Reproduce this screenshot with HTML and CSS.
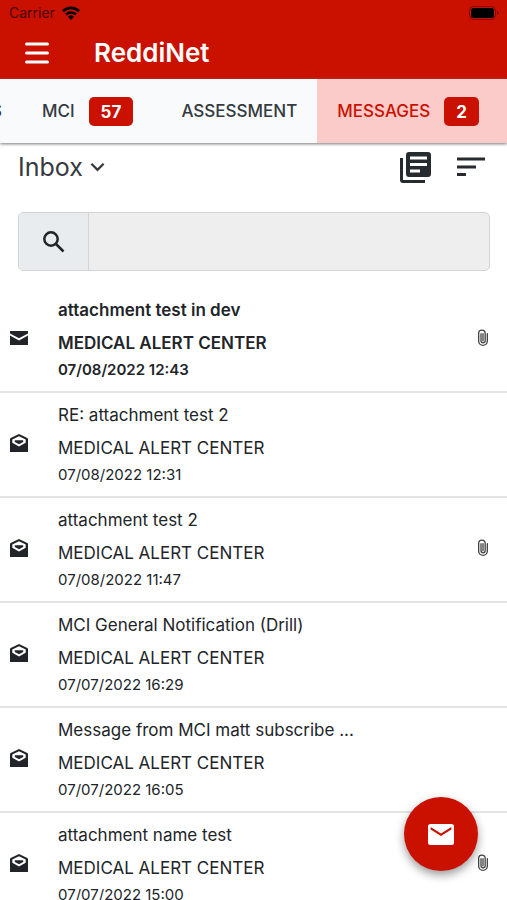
FILE: index.html
```html
<!DOCTYPE html>
<html lang="en">
<head>
<meta charset="utf-8">
<meta name="viewport" content="width=device-width, initial-scale=1">
<title>ReddiNet</title>
<link rel="stylesheet" href="styles.css">
</head>
<body>
<svg class="sprite" aria-hidden="true">
  <symbol id="mail" viewBox="0 0 18 14"><path d="M0 0h18v2.4L9 7.2 0 2.4zM0 4.6l9 4.8 9-4.8V14H0z"/></symbol>
  <symbol id="mail-open" viewBox="0 0 18 18"><path fill-rule="evenodd" d="M9 0l8.3 4Q18 4.400 18 5.200V18H0V5.200Q0 4.400.7 4zM9 2.300L2.300 5.600V8.800L9 12.400l6.700-3.600V5.600z"/><path d="M4.800 6.300h8.400v1.800L9 10.300 4.800 8.100z"/></symbol>
  <symbol id="clip" viewBox="0 0 12 18"><path fill="none" stroke="currentColor" stroke-width="1.400" stroke-linecap="round" d="M8.300 5v7.500a2.200 2.200 0 0 1-4.400 0V5M10.600 5v7.700a4.600 4.600 0 0 1-9.200 0V4.600a3.400 3.400 0 0 1 6.900 0V12M6 5v7.500"/></symbol>
</svg>
<div class="app">
  <header class="header">
    <div class="status">
      <span>Carrier</span>
      <svg class="wifi" viewBox="0 0 18 14" aria-hidden="true"><g fill="none" stroke="currentColor" stroke-width="2.600"><path d="M1 5.200a11.400 11.400 0 0 1 16 0"/><path d="M4 8.500a7.200 7.200 0 0 1 10 0"/></g><path d="M9 14l-3-3.200a4.300 4.300 0 0 1 6 0z"/></svg>
      <svg class="battery" viewBox="0 0 30 14" aria-hidden="true"><rect x=".5" y=".5" width="26" height="13" rx="4" fill="none" stroke="currentColor" opacity=".35"/><rect x="2" y="2" width="23" height="10" rx="2.500"/><path d="M28 5q1.500.5 1.500 2T28 9z" opacity=".5"/></svg>
    </div>
    <div class="titlebar">
      <button class="icon-button" type="button" aria-label="Menu"><svg class="menu-icon" viewBox="0 0 24 22"><path stroke="currentColor" stroke-width="3" stroke-linecap="round" d="M1.500 2h21M1.500 11h21M1.500 20h21"/></svg></button>
      <h1 class="brand">ReddiNet</h1>
    </div>
  </header>
  <nav class="tabs">
    <a class="tab" href="#s">S</a>
    <a class="tab tab-counted" href="#mci">MCI <span class="badge">57</span></a>
    <a class="tab" href="#assessment">ASSESSMENT</a>
    <a class="tab tab-counted tab-active" href="#messages" aria-current="page">MESSAGES <span class="badge">2</span></a>
  </nav>
  <div class="toolbar">
    <div class="folder">
      <select class="folder-select" aria-label="Folder"><option>Inbox</option></select>
      <svg class="chevron" viewBox="0 0 16 10" aria-hidden="true"><path fill="none" stroke="currentColor" stroke-width="2.400" d="M1.500 1.500L8 8l6.500-6.500"/></svg>
    </div>
    <div class="actions">
      <button class="icon-button" type="button" aria-label="Select messages"><svg class="library-icon" viewBox="0 0 31 31"><path d="M0 6h3v22h22v3H3q-3 0-3-3z"/><path fill-rule="evenodd" d="M9 0h19q3 0 3 3v19q0 3-3 3H9q-3 0-3-3V3q0-3 3-3zM10 4.500v3h17v-3zM10 11v3h17v-3zM10 17.500v3h10v-3z"/></svg></button>
      <button class="icon-button" type="button" aria-label="Sort"><svg class="sort-icon" viewBox="0 0 28 20"><path stroke="currentColor" stroke-width="3" d="M0 2h28M0 10h19M0 17.500h9"/></svg></button>
    </div>
  </div>
  <form class="search" role="search">
    <label class="search-label" for="search"><svg class="search-icon" viewBox="0 0 22 22"><g fill="none" stroke="currentColor" stroke-width="2.500"><circle cx="8" cy="8" r="6.700"/><path d="M12.500 12.500L20.500 20.500"/></g></svg></label>
    <input class="search-input" id="search" type="text" aria-label="Search messages">
  </form>
  <main class="list">
    <article class="message message-unread">
      <svg class="mail-icon"><use href="#mail"/></svg>
      <div class="message-body"><h2 class="subject">attachment test in dev</h2><p class="sender">MEDICAL ALERT CENTER</p><p class="date">07/08/2022 12:43</p></div>
      <svg class="clip-icon"><use href="#clip"/></svg>
    </article>
    <article class="message">
      <svg class="mail-icon"><use href="#mail-open"/></svg>
      <div class="message-body"><h2 class="subject">RE: attachment test 2</h2><p class="sender">MEDICAL ALERT CENTER</p><p class="date">07/08/2022 12:31</p></div>
    </article>
    <article class="message">
      <svg class="mail-icon"><use href="#mail-open"/></svg>
      <div class="message-body"><h2 class="subject">attachment test 2</h2><p class="sender">MEDICAL ALERT CENTER</p><p class="date">07/08/2022 11:47</p></div>
      <svg class="clip-icon"><use href="#clip"/></svg>
    </article>
    <article class="message">
      <svg class="mail-icon"><use href="#mail-open"/></svg>
      <div class="message-body"><h2 class="subject">MCI General Notification (Drill)</h2><p class="sender">MEDICAL ALERT CENTER</p><p class="date">07/07/2022 16:29</p></div>
    </article>
    <article class="message">
      <svg class="mail-icon"><use href="#mail-open"/></svg>
      <div class="message-body"><h2 class="subject">Message from MCI matt subscribe ...</h2><p class="sender">MEDICAL ALERT CENTER</p><p class="date">07/07/2022 16:05</p></div>
    </article>
    <article class="message">
      <svg class="mail-icon"><use href="#mail-open"/></svg>
      <div class="message-body"><h2 class="subject">attachment name test</h2><p class="sender">MEDICAL ALERT CENTER</p><p class="date">07/07/2022 15:00</p></div>
      <svg class="clip-icon"><use href="#clip"/></svg>
    </article>
  </main>
  <button class="compose" type="button" aria-label="Compose message"><svg class="compose-icon" viewBox="0 0 26 21"><path fill-rule="evenodd" d="M2.500 0h21Q26 0 26 2.500v16q0 2.500-2.500 2.500h-21Q0 21 0 18.500v-16Q0 0 2.500 0zM2.600 3v2.600L13 12l10.400-6.400V3L13 9.400z"/></svg></button>
</div>
</body>
</html>
```
FILE: styles.css
```css
* { box-sizing: border-box; }

body {
  margin: 0;
  background: #fff;
  color: #212529;
  font-family: Inter, "Liberation Sans", sans-serif;
  font-size: 17px;
  line-height: 24px;
}

h1, h2, p { margin: 0; font-weight: 400; }
svg { display: block; flex: none; fill: currentColor; }
button { padding: 0; border: 0; background: none; color: inherit; font: inherit; }
.sprite { position: absolute; width: 0; height: 0; }

.app { display: flex; flex-direction: column; height: 100vh; }

.header { flex: none; background: #ca1100; }
.status {
  display: flex;
  align-items: center;
  gap: 7px;
  height: 26px;
  padding: 0 8px 0 9px;
  color: #000;
  font-size: 14px;
}
.status span { color: #480600; }
.wifi { width: 18px; height: 14px; }
.battery { width: 30px; height: 14px; margin-left: auto; }
.titlebar {
  display: flex;
  align-items: center;
  gap: 45px;
  height: 53px;
  padding: 0 25px;
  color: #fff;
}
.menu-icon { width: 24px; height: 22px; }
.brand { font-size: 26px; font-weight: 600; line-height: 32px; }

.tabs {
  display: flex;
  flex: none;
  justify-content: flex-end;
  height: 64px;
  overflow: hidden;
  background: #f8fafc;
  box-shadow: 0 1px 3px #777;
  z-index: 1;
}
.tab {
  display: flex;
  flex: none;
  align-items: center;
  gap: 14px;
  padding: 0 20px;
  color: #343a40;
  font-weight: 500;
  text-decoration: none;
}
.tab-counted { padding-right: 28px; }
.tab-active { background: #fbcbca; color: #ca1100; }
.badge {
  padding: 3px 12px 2px;
  border-radius: 5px;
  background: #ca1100;
  color: #fff;
  font-weight: 700;
}

.toolbar {
  display: flex;
  flex: none;
  align-items: center;
  justify-content: space-between;
  height: 48px;
  padding: 0 22px 0 18px;
}
.folder { display: flex; align-items: center; gap: 7px; color: #343a40; }
.folder-select {
  appearance: none;
  padding: 0;
  border: 0;
  background: none;
  color: inherit;
  font: inherit;
  font-size: 25px;
  line-height: 32px;
}
.chevron { width: 15px; height: 10px; }
.actions { display: flex; align-items: center; gap: 26px; color: #262b30; }
.library-icon { width: 31px; height: 31px; }
.sort-icon { width: 28px; height: 20px; }

.search {
  display: flex;
  flex: none;
  height: 59px;
  margin: 21px 17px 17px 18px;
  overflow: hidden;
  border: 1px solid #d2d5d8;
  border-radius: 5px;
  background: #eee;
}
.search-label {
  display: grid;
  place-items: center;
  width: 70px;
  border-right: 1px solid #d2d5d8;
  background: #e9ecef;
}
.search-icon { width: 22px; height: 22px; }
.search-input {
  flex: 1;
  min-width: 0;
  padding: 0 16px;
  border: 0;
  background: none;
  color: inherit;
  font: inherit;
}

.list { flex: 1; min-height: 0; overflow-y: auto; scrollbar-width: none; }
.message {
  display: flex;
  align-items: center;
  gap: 30px;
  padding: 10px 18px 11px 10px;
  border-bottom: 2px solid #e3e4e5;
}
.message-body { flex: 1; min-width: 0; }
.mail-icon { width: 18px; height: 18px; margin-bottom: 2px; }
.clip-icon { width: 12px; height: 17px; margin-bottom: 3px; color: #444; }
.subject { font-size: 17px; line-height: 24px; }
.sender { margin: 9px 0 5px; }
.date { font-size: 15px; line-height: 20px; }
.message-unread .subject,
.message-unread .sender,
.message-unread .date { font-weight: 600; }

.compose {
  position: fixed;
  right: 29px;
  bottom: 29px;
  display: grid;
  place-items: center;
  width: 74px;
  height: 74px;
  border-radius: 50%;
  background: #ca1100;
  box-shadow: 0 4px 10px rgba(0, 0, 0, .4);
  color: #fff;
}
.compose-icon { width: 26px; height: 21px; }
```
